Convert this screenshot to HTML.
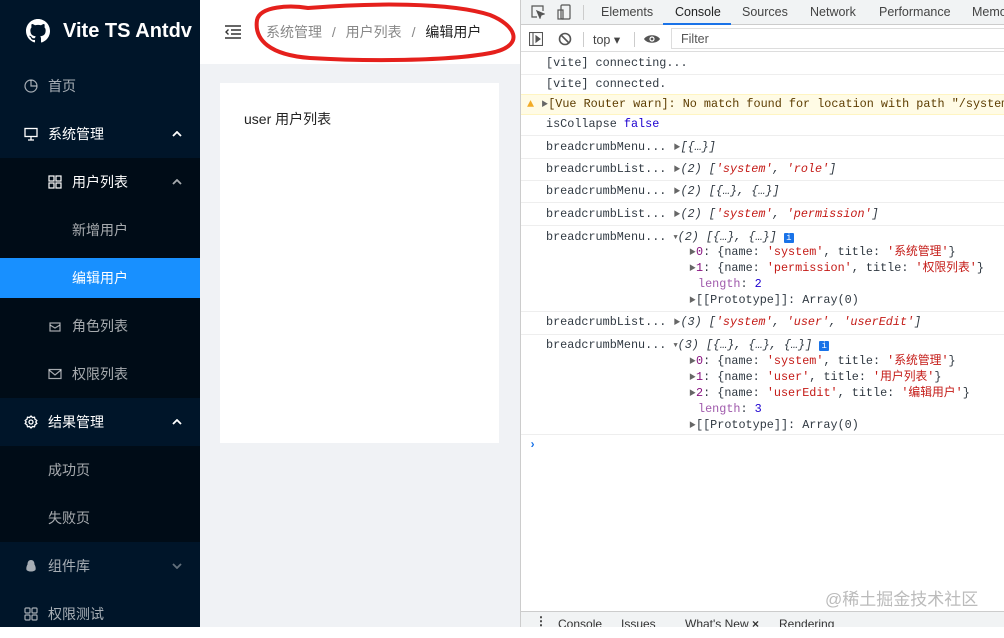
<!DOCTYPE html>
<html><head><meta charset="utf-8"><style>
*{margin:0;padding:0;box-sizing:border-box}
body{width:1004px;height:627px;overflow:hidden;position:relative;font-family:"Liberation Sans","Noto Sans CJK SC",sans-serif;background:#fff}
.sb{position:absolute;left:0;top:0;width:200px;height:627px;background:#001529;color:rgba(255,255,255,.65);font-size:14px}
.mi{position:absolute;left:0;width:200px;height:48px;line-height:48px}
.mi .t{position:absolute;left:48px}
.mi.sub .t{left:72px}
.ico{position:absolute;left:24px;top:17px;width:14px;height:14px}
.mi.sub .ico{left:48px}
.arr{position:absolute;left:172px;top:21px;width:10px;height:6px}
.main{position:absolute;left:200px;top:0;width:320px;height:627px;background:#f0f2f5}
.hdr{position:absolute;left:0;top:0;width:320px;height:64px;background:#fff}
.dt{position:absolute;left:520px;top:0;width:484px;height:627px;background:#fff;border-left:1px solid #ccc}
.mono{font-family:"Liberation Mono","Noto Sans CJK SC",monospace;font-size:11.8px;color:#303942}
.l{position:absolute;white-space:pre;line-height:16px}
.bd{position:absolute;left:0;width:484px;height:1px;background:#eee}
.s{color:#c41a16}.i{font-style:italic}.k{color:#881280}.n{color:#1c00cf}.p{color:#a05aac}
.tri{font-size:7px;color:#666;vertical-align:1px}
</style></head><body>
<div class="sb">
  <div style="position:absolute;left:0;top:0;width:200px;height:62px;color:#fff;font-weight:bold;font-size:20px;line-height:62px">
    <svg style="position:absolute;left:26px;top:19px" width="24" height="24" viewBox="0 0 16 16"><path fill="#fff" d="M8 0C3.58 0 0 3.58 0 8c0 3.540 2.29 6.53 5.47 7.59.4.07.55-.17.55-.38v-1.33c-2.230.48-2.700-1.070-2.700-1.070-.36-.92-.89-1.170-.89-1.170-.73-.5.05-.49.05-.49.8.06 1.230.83 1.230.83.72 1.220 1.870.87 2.330.66.07-.52.28-.87.51-1.070-1.780-.2-3.640-.89-3.640-3.950 0-.87.31-1.590.82-2.150-.08-.2-.36-1.020.08-2.120 0 0 .67-.21 2.2.82a7.6 7.6 0 0 1 4 0c1.530-1.040 2.2-.82 2.2-.82.44 1.1.16 1.920.08 2.120.51.56.82 1.270.82 2.150 0 3.070-1.870 3.750-3.650 3.950.29.25.54.73.54 1.480v2.2c0 .21.15.46.55.38A8 8 0 0 0 16 8c0-4.420-3.580-8-8-8z"/></svg>
    <span style="position:absolute;left:63px">Vite TS Antdv</span>
  </div>
  <div class="mi" style="top:62px"><svg class="ico" viewBox="0 0 14 14"><circle cx="7" cy="7" r="6" fill="none" stroke="currentColor" stroke-width="1.2"/><path d="M7 1v6h6" fill="none" stroke="currentColor" stroke-width="1.2"/></svg><span class="t">首页</span></div>
  <div class="mi" style="top:110px;color:#fff"><svg class="ico" viewBox="0 0 14 14"><rect x="1" y="1.5" width="12" height="8" fill="none" stroke="currentColor" stroke-width="1.3"/><path d="M4 13h6M7 9.5V13" stroke="currentColor" stroke-width="1.3"/></svg><span class="t">系统管理</span><svg class="arr" viewBox="0 0 10 6"><path d="M1 5l4-4 4 4" fill="none" stroke="currentColor" stroke-width="1.8"/></svg></div>
  <div style="position:absolute;left:0;top:158px;width:200px;height:240px;background:#000c17"></div>
  <div class="mi sub" style="top:158px;color:#fff"><svg class="ico" viewBox="0 0 14 14" fill="none" stroke="currentColor" stroke-width="1.2"><rect x="1" y="1" width="5" height="5"/><rect x="8" y="1" width="5" height="5"/><rect x="1" y="8" width="5" height="5"/><rect x="8" y="8" width="5" height="5"/></svg><span class="t">用户列表</span><svg class="arr" viewBox="0 0 10 6" style="opacity:.65"><path d="M1 5l4-4 4 4" fill="none" stroke="currentColor" stroke-width="1.8"/></svg></div>
  <div class="mi" style="top:206px"><span class="t" style="left:72px">新增用户</span></div>
  <div class="mi" style="top:258px;line-height:40px;background:#1890ff;color:#fff;height:40px"><span class="t" style="left:72px">编辑用户</span></div>
  <div class="mi sub" style="top:302px"><svg class="ico" viewBox="0 0 14 14" fill="none" stroke="currentColor" stroke-width="1.2"><rect x="2" y="4" width="10" height="8"/><path d="M2 6l5 3 5-3"/></svg><span class="t">角色列表</span></div>
  <div class="mi sub" style="top:350px"><svg class="ico" viewBox="0 0 14 14" fill="none" stroke="currentColor" stroke-width="1.2"><rect x="1" y="2.5" width="12" height="9"/><path d="M1 3l6 5 6-5"/></svg><span class="t">权限列表</span></div>
  <div class="mi" style="top:398px;color:#fff"><svg class="ico" viewBox="0 0 14 14" fill="none" stroke="currentColor" stroke-width="1.3"><circle cx="7" cy="7" r="2"/><path d="M7 1l1.5 1.5 2-.3.5 2 1.8 1.3-1 1.5 1 1.5-1.8 1.3-.5 2-2-.3L7 13l-1.5-1.5-2 .3-.5-2L1.2 8.5l1-1.5-1-1.5L3 4.2l.5-2 2 .3z"/></svg><span class="t">结果管理</span><svg class="arr" viewBox="0 0 10 6"><path d="M1 5l4-4 4 4" fill="none" stroke="currentColor" stroke-width="1.8"/></svg></div>
  <div style="position:absolute;left:0;top:446px;width:200px;height:96px;background:#000c17"></div>
  <div class="mi" style="top:446px"><span class="t">成功页</span></div>
  <div class="mi" style="top:494px"><span class="t">失败页</span></div>
  <div class="mi" style="top:542px"><svg class="ico" viewBox="0 0 14 14"><path d="M7 1C4.5 1 3.5 3 3.5 5.5 2.5 7 2 9 2.5 11c1 .5 1.5 1.5 4.5 1.5s3.5-1 4.5-1.5C12 9 11.5 7 10.5 5.5 10.5 3 9.5 1 7 1z" fill="currentColor"/></svg><span class="t">组件库</span><svg class="arr" viewBox="0 0 10 6" style="opacity:.6"><path d="M1 1l4 4 4-4" fill="none" stroke="currentColor" stroke-width="1.8"/></svg></div>
  <div class="mi" style="top:590px"><svg class="ico" viewBox="0 0 14 14" fill="none" stroke="currentColor" stroke-width="1.2"><rect x="1" y="1" width="5" height="5" rx="1"/><rect x="8" y="1" width="5" height="5" rx="1"/><rect x="1" y="8" width="5" height="5" rx="1"/><rect x="8" y="8" width="5" height="5" rx="1"/></svg><span class="t">权限测试</span></div>
</div>
<div class="main">
  <div class="hdr">
    <svg style="position:absolute;left:25px;top:25px" width="16" height="14" viewBox="0 0 16 14" fill="none" stroke="#333" stroke-width="1.4"><path d="M0 1h16M6 5h10M6 9h10M0 13h16M3.5 4.5L1 7l2.5 2.5"/></svg>
    <div style="position:absolute;left:66px;top:22px;font-size:14px;color:#888;white-space:nowrap">系统管理 <span style="margin:0 6px">/</span> 用户列表 <span style="margin:0 6px">/</span> <span style="color:#222">编辑用户</span></div>
    <svg style="position:absolute;left:50px;top:0" width="270" height="66" viewBox="0 0 270 66" fill="none" stroke="#e5201c" stroke-width="4" stroke-linecap="round"><path d="M58 8C40 5 10 6 7 20 4 40 20 55 60 58 110 61 200 62 245 52 275 44 265 25 240 15 200 2 120 3 58 8"/></svg>
  </div>
  <div style="position:absolute;left:20px;top:83px;width:279px;height:360px;background:#fff"></div>
  <div style="position:absolute;left:44px;top:109px;font-size:14px;color:#222">user 用户列表</div>
</div>
<div class="dt">
  <div style="position:absolute;left:0;top:0;width:484px;height:25px;background:#f1f3f4;border-bottom:1px solid #ccc;font-size:12.5px;color:#444">
    <svg style="position:absolute;left:10px;top:5px" width="14" height="14" viewBox="0 0 14 14" fill="none" stroke="#555" stroke-width="1.2"><path d="M6 12H1V1h11v5"/><path d="M6 6l7 3-3 1-1 3z" fill="#555"/></svg>
    <svg style="position:absolute;left:36px;top:4px" width="14" height="16" viewBox="0 0 14 16" fill="none" stroke="#555" stroke-width="1.2"><rect x="4" y="1" width="9" height="14" rx="1"/><rect x="1" y="6" width="5" height="9"/></svg>
    <div style="position:absolute;left:62px;top:5px;width:1px;height:15px;background:#ccc"></div>
    <span style="position:absolute;left:80px;top:5px">Elements</span>
    <span style="position:absolute;left:154px;top:5px;color:#222">Console</span>
    <div style="position:absolute;left:142px;top:23px;width:68px;height:2px;background:#1a73e8"></div>
    <span style="position:absolute;left:221px;top:5px">Sources</span>
    <span style="position:absolute;left:289px;top:5px">Network</span>
    <span style="position:absolute;left:358px;top:5px">Performance</span>
    <span style="position:absolute;left:451px;top:5px">Memo</span>
  </div>
  <div style="position:absolute;left:0;top:26px;width:484px;height:26px;background:#fff;border-bottom:1px solid #ddd;font-size:12.5px;color:#444">
    <svg style="position:absolute;left:8px;top:6px" width="14" height="14" viewBox="0 0 14 14" fill="none" stroke="#555" stroke-width="1.1"><rect x=".5" y=".5" width="13" height="13"/><path d="M4 1v12"/><path d="M7 4l4 3-4 3z" fill="#555"/></svg>
    <svg style="position:absolute;left:37px;top:6px" width="14" height="14" viewBox="0 0 14 14" fill="none" stroke="#555" stroke-width="1.6"><circle cx="7" cy="7" r="5.5"/><path d="M3 3l8 8"/></svg>
    <div style="position:absolute;left:62px;top:6px;width:1px;height:15px;background:#ccc"></div>
    <span style="position:absolute;left:72px;top:6px">top ▾</span>
    <div style="position:absolute;left:113px;top:6px;width:1px;height:15px;background:#ccc"></div>
    <svg style="position:absolute;left:122px;top:7px" width="18" height="12" viewBox="0 0 18 12"><path d="M1 6C4 1 14 1 17 6 14 11 4 11 1 6z" fill="#555"/><circle cx="9" cy="6" r="2.6" fill="#fff"/><circle cx="9" cy="6" r="1.4" fill="#555"/></svg>
    <div style="position:absolute;left:150px;top:2px;width:334px;height:21px;border:1px solid #ddd;border-right:none"></div>
    <span style="position:absolute;left:160px;top:6px;color:#555">Filter</span>
  </div>
  <div class="mono">
    <div class="l" style="left:25px;top:55px">[vite] connecting...</div>
    <div class="bd" style="top:74px"></div>
    <div class="l" style="left:25px;top:76px">[vite] connected.</div>
    <div style="position:absolute;left:0;top:94px;width:484px;height:21px;background:#fffbe5;border-top:1px solid #fff5c2;border-bottom:1px solid #fff5c2"></div>
    <div class="l" style="left:6px;top:96px;color:#5c3c00"><span style="color:#f2ab26">▲</span> <span class="tri">▶</span>[Vue Router warn]: No match found for location with path "/system/user</div>
    <div class="l" style="left:25px;top:116px">isCollapse <span class="n">false</span></div>
    <div class="bd" style="top:135px"></div>
    <div class="l" style="left:25px;top:139px">breadcrumbMenu... <span class="tri">▶</span><span class="i">[{…}]</span></div>
    <div class="bd" style="top:158px"></div>
    <div class="l" style="left:25px;top:161px">breadcrumbList... <span class="tri">▶</span><span class="i">(2) [<span class="s">'system'</span>, <span class="s">'role'</span>]</span></div>
    <div class="bd" style="top:180px"></div>
    <div class="l" style="left:25px;top:183px">breadcrumbMenu... <span class="tri">▶</span><span class="i">(2) [{…}, {…}]</span></div>
    <div class="bd" style="top:202px"></div>
    <div class="l" style="left:25px;top:206px">breadcrumbList... <span class="tri">▶</span><span class="i">(2) [<span class="s">'system'</span>, <span class="s">'permission'</span>]</span></div>
    <div class="bd" style="top:225px"></div>
    <div class="l" style="left:25px;top:229px">breadcrumbMenu... <span class="tri">▼</span><span class="i">(2) [{…}, {…}]</span> <span style="display:inline-block;width:10px;height:10px;background:#1a73e8;color:#fff;font-size:9px;line-height:10px;text-align:center;border-radius:1px">i</span></div>
    <div class="l" style="left:168px;top:244px"><span class="tri">▶</span><span class="k">0</span>: {name: <span class="s">'system'</span>, title: <span class="s">'系统管理'</span>}</div>
    <div class="l" style="left:168px;top:260px"><span class="tri">▶</span><span class="k">1</span>: {name: <span class="s">'permission'</span>, title: <span class="s">'权限列表'</span>}</div>
    <div class="l" style="left:177px;top:276px"><span class="p">length</span>: <span class="n">2</span></div>
    <div class="l" style="left:168px;top:292px"><span class="tri">▶</span>[[Prototype]]: Array(0)</div>
    <div class="bd" style="top:311px"></div>
    <div class="l" style="left:25px;top:314px">breadcrumbList... <span class="tri">▶</span><span class="i">(3) [<span class="s">'system'</span>, <span class="s">'user'</span>, <span class="s">'userEdit'</span>]</span></div>
    <div class="bd" style="top:334px"></div>
    <div class="l" style="left:25px;top:337px">breadcrumbMenu... <span class="tri">▼</span><span class="i">(3) [{…}, {…}, {…}]</span> <span style="display:inline-block;width:10px;height:10px;background:#1a73e8;color:#fff;font-size:9px;line-height:10px;text-align:center;border-radius:1px">i</span></div>
    <div class="l" style="left:168px;top:353px"><span class="tri">▶</span><span class="k">0</span>: {name: <span class="s">'system'</span>, title: <span class="s">'系统管理'</span>}</div>
    <div class="l" style="left:168px;top:369px"><span class="tri">▶</span><span class="k">1</span>: {name: <span class="s">'user'</span>, title: <span class="s">'用户列表'</span>}</div>
    <div class="l" style="left:168px;top:385px"><span class="tri">▶</span><span class="k">2</span>: {name: <span class="s">'userEdit'</span>, title: <span class="s">'编辑用户'</span>}</div>
    <div class="l" style="left:177px;top:401px"><span class="p">length</span>: <span class="n">3</span></div>
    <div class="l" style="left:168px;top:417px"><span class="tri">▶</span>[[Prototype]]: Array(0)</div>
    <div class="bd" style="top:434px"></div>
    <div class="l" style="left:8px;top:437px;color:#1a73e8;font-weight:bold">›</div>
  </div>
  <div style="position:absolute;left:304px;top:585px;font-size:17px;color:#bbb">@稀土掘金技术社区</div>
  <div style="position:absolute;left:0;top:611px;width:484px;height:16px;background:#f1f3f4;border-top:1px solid #ccc;font-size:12px;color:#333;overflow:hidden">
    <span style="position:absolute;left:14px;top:2px;font-weight:bold">⋮</span>
    <span style="position:absolute;left:37px;top:5px">Console</span>
    <span style="position:absolute;left:100px;top:5px">Issues</span>
    <span style="position:absolute;left:164px;top:5px">What's New <b>×</b></span>
    <span style="position:absolute;left:258px;top:5px">Rendering</span>
  </div>
</div>
</body></html>
